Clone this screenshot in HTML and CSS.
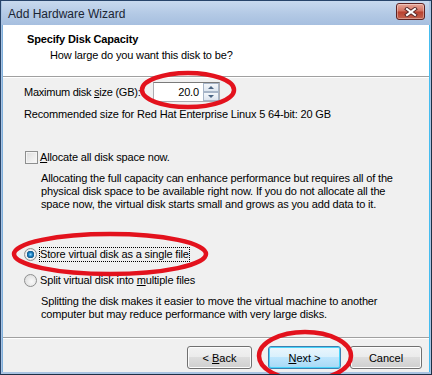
FILE: index.html
```html
<!DOCTYPE html>
<html lang="en">
<head>
  <meta charset="UTF-8" />
  <title>Add Hardware Wizard</title>
  <link rel="stylesheet" href="styles.css">
</head>
<body>

  <div class="window">
    <div class="titlebar">
      <span class="title">Add Hardware Wizard</span>
      <div class="close">
        <svg width="14" height="10" viewBox="0 0 14 10">
          <path d="M3 2 L11 8 M11 2 L3 8" stroke="#5a2a2a" stroke-width="4" stroke-linecap="square" />
          <path d="M3 2 L11 8 M11 2 L3 8" stroke="#fff" stroke-width="2" stroke-linecap="square" />
        </svg>
      </div>
    </div>

    <div class="client">
      <div class="header">
        <div class="h-title">Specify Disk Capacity</div>
        <div class="h-sub">How large do you want this disk to be?</div>
      </div>

      <div class="content">
        <div class="size-row">
          <span class="size-label">Maximum disk <u>s</u>ize (GB):</span>
          <div class="spin">
            <span class="spin-value">20.0</span>
            <div class="spin-btns">
              <span class="spin-btn"><i class="arrow-up"></i></span>
              <span class="spin-btn"><i class="arrow-down"></i></span>
            </div>
          </div>
        </div>

        <div class="note">Recommended size for Red Hat Enterprise Linux 5 64-bit: 20 GB</div>

        <div class="option opt-check">
          <span class="checkbox"></span>
          <span><u>A</u>llocate all disk space now.</span>
        </div>
        <p class="desc desc-alloc">Allocating the full capacity can enhance performance but requires all of the<br>physical disk space to be available right now. If you do not allocate all the<br>space now, the virtual disk starts small and grows as you add data to it.</p>

        <div class="option opt-single">
          <span class="radio checked"></span>
          <span class="focus">Store virtual disk as a single file</span>
        </div>
        <div class="option opt-split">
          <span class="radio"></span>
          <span>Split virtual disk into <u>m</u>ultiple files</span>
        </div>
        <p class="desc desc-split">Splitting the disk makes it easier to move the virtual machine to another<br>computer but may reduce performance with very large disks.</p>
      </div>

      <div class="footer">
        <button class="btn btn-back">&lt; <u>B</u>ack</button>
        <button class="btn btn-next default"><u>N</u>ext &gt;</button>
        <button class="btn btn-cancel">Cancel</button>
      </div>
    </div>

    <svg class="marks" width="432" height="375" viewBox="0 0 432 375">
      <ellipse cx="188" cy="90" rx="46" ry="17" />
      <ellipse cx="110" cy="254" rx="96" ry="20" />
      <ellipse cx="305" cy="356" rx="46" ry="24" />
    </svg>
  </div>

</body>
</html>
```

FILE: styles.css
```css
body {
  margin: 0;
  font-family: "Liberation Sans", Arial, sans-serif;
  font-size: 11px;
  letter-spacing: -0.15px;
  color: #000;
  background: #fff;
}

.window {
  position: relative;
  width: 432px;
  height: 375px;
  box-sizing: border-box;
  display: flex;
  flex-direction: column;
  background: #a9c3e2;
  border: 1px solid #28446a;
  border-right: 1px solid #1d2f45;
  border-bottom: 1px solid #1d2f45;
  padding: 0 2px 2px 1px;
  overflow: hidden;
}

.titlebar {
  height: 24px;
  display: flex;
  align-items: center;
  justify-content: space-between;
  padding: 0 4px 0 6px;
  background: linear-gradient(#c8d9ee, #b3c9e5 55%, #a6bfdf);
}

.title {
  font-size: 12px;
  letter-spacing: 0;
  color: #1b2533;
  margin-top: 1px;
}

.close {
  width: 27px;
  height: 15px;
  margin-top: -3px;
  display: flex;
  align-items: center;
  justify-content: center;
  border: 1px solid #5e2222;
  border-radius: 3px;
  background: linear-gradient(#e7a79a, #d2705f 48%, #b8402e 52%, #c4634f);
  box-shadow: inset 0 0 0 1px rgba(255, 255, 255, 0.35);
}

.client {
  flex: 1;
  display: flex;
  flex-direction: column;
  background: #f0f0f0;
  border-left: 1px solid #7fb0dc;
  box-shadow: 1px 0 0 #45bdf0;
}

.header {
  height: 52px;
  box-sizing: border-box;
  background: #fff;
  padding: 8px 0 0 24px;
  border-bottom: 1px solid #a0a0a0;
  box-shadow: 0 1px 0 #fff;
  line-height: 13px;
}

.h-title {
  font-weight: bold;
}

.h-sub {
  margin-top: 3px;
  padding-left: 23px;
}

.content {
  flex: 1;
  padding: 5px 0 0 21px;
  line-height: 13px;
}

.size-row {
  display: flex;
  align-items: center;
  height: 20px;
}

.size-label {
  width: 129px;
  letter-spacing: -0.25px;
}

.spin {
  display: flex;
  width: 67px;
  height: 20px;
  box-sizing: border-box;
  border: 1px solid #abadb3;
  border-top-color: #7a7a7a;
  background: #fff;
}

.spin-value {
  flex: 1;
  text-align: right;
  padding: 3px 4px 0 0;
}

.spin-btns {
  width: 16px;
  display: flex;
  flex-direction: column;
}

.spin-btn {
  flex: 1;
  display: flex;
  align-items: center;
  justify-content: center;
  border: 1px solid #a7b5c8;
  background: linear-gradient(#f4f7fb, #dde5ef);
}

.arrow-up,
.arrow-down {
  width: 0;
  height: 0;
  border-left: 3px solid transparent;
  border-right: 3px solid transparent;
}

.arrow-up {
  border-bottom: 3px solid #4b6584;
}

.arrow-down {
  border-top: 3px solid #4b6584;
}

.note {
  margin-top: 6px;
}

.option {
  display: flex;
  align-items: center;
  gap: 3px;
  height: 15px;
}

.opt-check {
  margin-top: 29px;
  padding-left: 1px;
  gap: 2px;
}

.opt-single {
  margin-top: 36px;
}

.opt-split {
  margin-top: 11px;
}

.checkbox {
  width: 13px;
  height: 13px;
  box-sizing: border-box;
  border: 1px solid #8e8f8f;
  background: linear-gradient(135deg, #dcdcdc, #fafafa);
  box-shadow: inset 0 0 0 1px #f4f4f4;
}

.radio {
  width: 13px;
  height: 13px;
  box-sizing: border-box;
  border-radius: 50%;
  border: 1px solid #8e8f8f;
  background: radial-gradient(circle at 60% 60%, #fafafa, #d6d6d6);
}

.radio.checked {
  background: radial-gradient(circle, #8fd8ff 0, #1d7fc0 2px, #135a8c 3.5px, #f4f4f4 4px, #dcdcdc 6px);
}

.focus {
  outline: 1px dotted #000;
  outline-offset: 0;
}

.desc {
  margin: 7px 0 0 17px;
  white-space: nowrap;
}

.footer {
  height: 35px;
  box-sizing: border-box;
  border-top: 1px solid #a0a0a0;
  box-shadow: inset 0 1px 0 #fff;
  display: flex;
  justify-content: flex-end;
  padding: 8px 7px 0 0;
}

.btn {
  height: 23px;
  font: inherit;
  font-size: 11px;
  color: #000;
  border: 1px solid #707070;
  border-radius: 3px;
  background: linear-gradient(#f2f2f2, #ebebeb 50%, #dddddd 50%, #cfcfcf);
  box-shadow: inset 0 0 0 1px #fcfcfc;
  padding: 0;
}

.btn-back {
  width: 65px;
}

.btn-next {
  width: 73px;
  margin-left: 16px;
}

.btn-cancel {
  width: 72px;
  margin-left: 9px;
}

.btn.default {
  border-color: #3c7fb1;
  background: linear-gradient(#eaf6fd, #d9f0fc 50%, #bee6fd 50%, #a7d9f5);
  box-shadow: inset 0 0 0 1px #48d4f9;
}

.marks {
  position: absolute;
  left: -1px;
  top: -1px;
  pointer-events: none;
}

.marks ellipse {
  fill: none;
  stroke: #e3121d;
  stroke-width: 4.5;
}
```
